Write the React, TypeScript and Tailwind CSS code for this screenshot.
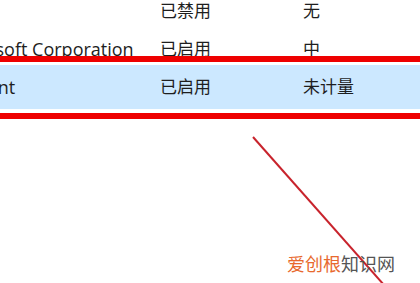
import React from 'react'

// Startup list crop with a red highlight box and a pointer line drawn over it

interface Row {
  publisher: string
  status: string
  impact: string
  selected?: boolean
}

const rows: Row[] = [
  { publisher: '', status: '已禁用', impact: '无' },
  { publisher: 'Microsoft Corporation', status: '已启用', impact: '中' },
  { publisher: 'Tencent', status: '已启用', impact: '未计量', selected: true },
]

const font = { fontFamily: '"Open Sans", "Noto Sans CJK SC", sans-serif' }

function Cells({ row }: { row: Row }) {
  return (
    <>
      <div className="w-[212px] -ml-[52px] text-[18px] whitespace-nowrap overflow-hidden">{row.publisher}</div>
      <div className="w-[143px] text-[17px]">{row.status}</div>
      <div className="flex-1 text-[17px]">{row.impact}</div>
    </>
  )
}

export default function App() {
  return (
    <div className="relative w-[420px] h-[283px] overflow-hidden bg-white text-[#1e1e1e]" style={font}>
      <div className="flex flex-col">
        <div className="flex items-center h-[22px]">
          <Cells row={rows[0]} />
        </div>
        <div className="flex items-center h-[22px] mt-[16px]">
          <Cells row={rows[1]} />
        </div>
        <div className="flex items-center h-[44px] mt-[5px] bg-[#cce8ff]">
          <Cells row={rows[2]} />
        </div>
      </div>

      {/* red annotation box around the selected row */}
      <div className="absolute -left-2 -right-2 top-[56px] h-[63px] border-y-[6px] border-[#ee0000]" />

      {/* pointer line */}
      <svg className="absolute inset-0" width="420" height="283" viewBox="0 0 420 283">
        <line x1="253" y1="137" x2="384" y2="285" stroke="#c8232c" strokeWidth="2" />
      </svg>

      {/* watermark */}
      <div
        className="absolute left-[287px] top-[251px] text-[18px] leading-[24px]"
        style={{ fontFamily: '"Noto Sans CJK SC", sans-serif' }}
      >
        <span className="text-[#e8692e]">爱创根</span>
        <span className="text-[#555555]">知识网</span>
      </div>
    </div>
  )
}
